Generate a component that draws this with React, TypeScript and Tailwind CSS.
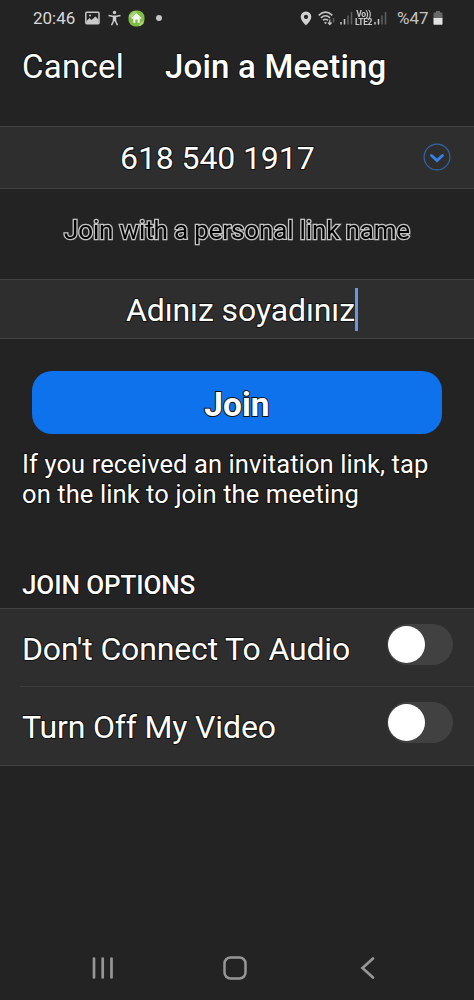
import React from "react";

const edge = "[-webkit-text-stroke:2px_#111111] [paint-order:stroke_fill]";

function Signal() {
  return (
    <svg width="13" height="14" viewBox="0 0 13 14" fill="none" strokeWidth="1.5">
      <path d="M1 11v2.5M4.5 8v5.5" stroke="#c4c4c4" />
      <path d="M8 4.500v9M11.500 1v12.500" stroke="#606060" />
    </svg>
  );
}

function StatusBar() {
  return (
    <div className="flex h-9 w-full items-center text-[#d8d8d8]">
      <span className="ml-[33px] w-[52px] text-[17px] leading-9">20:46</span>
      <svg width="15" height="14" viewBox="0 0 15 14">
        <rect x="0.800" y="1.300" width="13.200" height="11.400" rx="1" fill="none" stroke="#c9c9c9" strokeWidth="1.500" />
        <path d="M1.500 12V10l3-3 2 2 4-3.500 3 3V12z" fill="#c9c9c9" />
        <circle cx="5" cy="4.600" r="1" fill="#c9c9c9" />
      </svg>
      <svg className="ml-2" width="13" height="16" viewBox="0 0 13 16" fill="none" stroke="#cccccc">
        <circle cx="6.500" cy="2.500" r="1.700" fill="#cccccc" stroke="none" />
        <path d="M.500 5.500 4.500 6.200h4l4-.700" strokeWidth="1.600" />
        <path d="M5.500 6.500v4.500L3.500 15.300M7.500 6.500v4.500l2 4.300" strokeWidth="1.500" />
        <path d="M6.500 6v5" strokeWidth="3" />
      </svg>
      <svg className="ml-[7px]" width="17" height="17" viewBox="0 0 17 17">
        <rect x="0.500" y="0.500" width="16" height="16" rx="7" fill="#7fbd42" />
        <path d="M1 6 6 1.200l3 .3L3 8zM11 15l4.500-5v3.500L12 16z" fill="#a9d77b" />
        <path d="M3.700 8.500 8.500 4.300l4.800 4.200" fill="none" stroke="#fff" strokeWidth="1.500" />
        <path d="M5.300 8v4.700h2V9.500h2.400v3.200h2V8L8.500 5.200z" fill="#fff" />
      </svg>
      <span className="ml-[11px] h-[6px] w-[6px] rounded-full bg-[#c4c4c4]" />
      <svg className="ml-[138px]" width="12" height="15" viewBox="0 0 12 15">
        <path fillRule="evenodd" d="M6 .500a5.300 5.300 0 0 0-5.300 5.300C.700 9.500 6 14.500 6 14.500s5.300-5 5.300-8.700A5.300 5.300 0 0 0 6 .500zm0 3.300a2.100 2.100 0 1 1 0 4.200 2.100 2.100 0 0 1 0-4.200z" fill="#d2d2d2" />
      </svg>
      <svg className="ml-[6px]" width="18" height="15" viewBox="0 0 18 15" fill="none" stroke="#c4c4c4" strokeWidth="1.500">
        <path d="M.700 4.400q6.800-6.500 13.600 0M2.900 6.900q4.600-4.300 9.200 0M5 9.400q2.500-2.200 5 0" />
        <circle cx="7.500" cy="11.800" r="1.100" fill="#c4c4c4" stroke="none" />
        <path d="M11.800 8.500v5M10 11.500l1.800 2 1.800-2" strokeWidth="1.200" />
        <path d="M15.500 7v4.500" stroke="#5a5a5a" />
      </svg>
      <div className="ml-[4px]"><Signal /></div>
      <div className="ml-[1px] flex w-[19px] flex-col items-center text-[8.500px] font-bold leading-[8px] tracking-[-0.350px] text-[#c9c9c9] grayscale">
        <span>Vo))</span>
        <span>LTE2</span>
      </div>
      <div className="ml-[1px]"><Signal /></div>
      <span className="ml-[10px] w-[35px] text-[17px] leading-9 text-[#c4c4c4]">%47</span>
      <svg className="ml-px" width="10" height="14" viewBox="0 0 10 14">
        <path d="M3 0h4v1.500h1.500q1 0 1 1V8H.500V2.500q0-1 1-1H3z" fill="#686868" />
        <path d="M.500 7h9v6q0 .700-.700.700H1.200q-.700 0-.700-.700z" fill="#e2e2e2" />
      </svg>
    </div>
  );
}

function Toggle() {
  return (
    <div className="mr-[21px] flex h-[41px] w-[66px] items-center rounded-full bg-[#414141] pl-[1px]">
      <div className="h-[37px] w-[37px] rounded-full bg-white" />
    </div>
  );
}

export default function App() {
  return (
    <div className="flex h-[1000px] w-[474px] flex-col overflow-hidden whitespace-nowrap bg-[#232323] font-['Roboto',sans-serif] text-white">
      <StatusBar />
      <header className="flex h-[90px] pt-[9px] text-[33px] leading-[44px]">
        <span className={`ml-[22px] w-[142px] tracking-[0.250px] ${edge}`}>Cancel</span>
        <h1 className={`ml-px font-medium tracking-[0.2px] ${edge}`}>Join a Meeting</h1>
      </header>
      <div className="flex h-[63px] items-center border-y border-[#424242] bg-[#2e2e2e] text-[32px]">
        <span className={`ml-[120px] w-[303px] tracking-[-0.1px] ${edge}`}>618 540 1917</span>
        <svg className="-mt-px" width="28" height="28" viewBox="0 0 28 28" fill="none">
          <circle cx="14" cy="14" r="12.900" stroke="#3465a8" strokeWidth="1.200" />
          <path d="m8.500 12.500 5.500 5 5.500-5" stroke="#3483ed" strokeWidth="2.800" strokeLinecap="round" />
        </svg>
      </div>
      <div className="flex h-[90px] justify-center pt-[21px] text-[26px] leading-[40px] tracking-[-0.15px] text-black grayscale [-webkit-text-stroke:2.6px_#c4c4c4] [paint-order:stroke_fill]">
        Join with a personal link name
      </div>
      <div className="flex h-[60px] items-center border-y border-[#424242] bg-[#2e2e2e] text-[32px]">
        <span className={`ml-[126px] w-[229px] pt-[2px] tracking-[-0.1px] ${edge}`}>Adınız soyadınız</span>
        <span className="h-[43px] w-[3px] bg-[#6598e8]" />
      </div>
      <button className="ml-8 mt-8 flex h-[63px] w-[410px] items-center justify-center rounded-[20px] bg-[#0e72ed] pt-[5px] text-[33.500px] font-bold">
        <span className={edge}>Join</span>
      </button>
      <p className={`ml-[22px] mt-[15px] h-[61px] text-[25.500px] leading-[30px] tracking-[0.100px] ${edge}`}>
        If you received an invitation link, tap<br />on the link to join the meeting
      </p>
      <h2 className={`ml-[22px] mt-[60px] h-[38px] text-[26px] font-medium leading-[30px] tracking-[-0.100px] ${edge}`}>JOIN OPTIONS</h2>
      <section className="flex h-[158px] flex-col border-y border-[#424242] bg-[#2e2e2e] text-[32px] leading-[40px]">
        <div className="ml-5 flex h-[78px] justify-between border-b border-[#3c3c3c]">
          <span className={`ml-[2px] mt-5 tracking-[-0.150px] ${edge}`}>Don't Connect To Audio</span>
          <div className="mt-[15px]"><Toggle /></div>
        </div>
        <div className="ml-5 flex h-[78px] justify-between">
          <span className={`ml-[2px] mt-5 tracking-[-0.150px] ${edge}`}>Turn Off My Video</span>
          <div className="mt-[15px]"><Toggle /></div>
        </div>
      </section>
      <nav className="mt-auto flex h-[65px] items-center">
        <svg className="ml-[91px]" width="23" height="24" viewBox="0 0 23 24" stroke="#969696" strokeWidth="2.700" strokeLinecap="round">
          <path d="M3 2.500v19M11.700 2.500v19M20.500 2.500v19" />
        </svg>
        <svg className="ml-[109px]" width="24" height="24" viewBox="0 0 24 24" fill="none">
          <rect x="1.500" y="1.500" width="21" height="21" rx="6" stroke="#969696" strokeWidth="2.500" />
        </svg>
        <svg className="ml-[113px]" width="16" height="24" viewBox="0 0 16 24" fill="none" stroke="#969696" strokeWidth="2.700" strokeLinecap="round">
          <path d="M13 2.500 2.500 12 13 21.500" />
        </svg>
      </nav>
    </div>
  );
}
